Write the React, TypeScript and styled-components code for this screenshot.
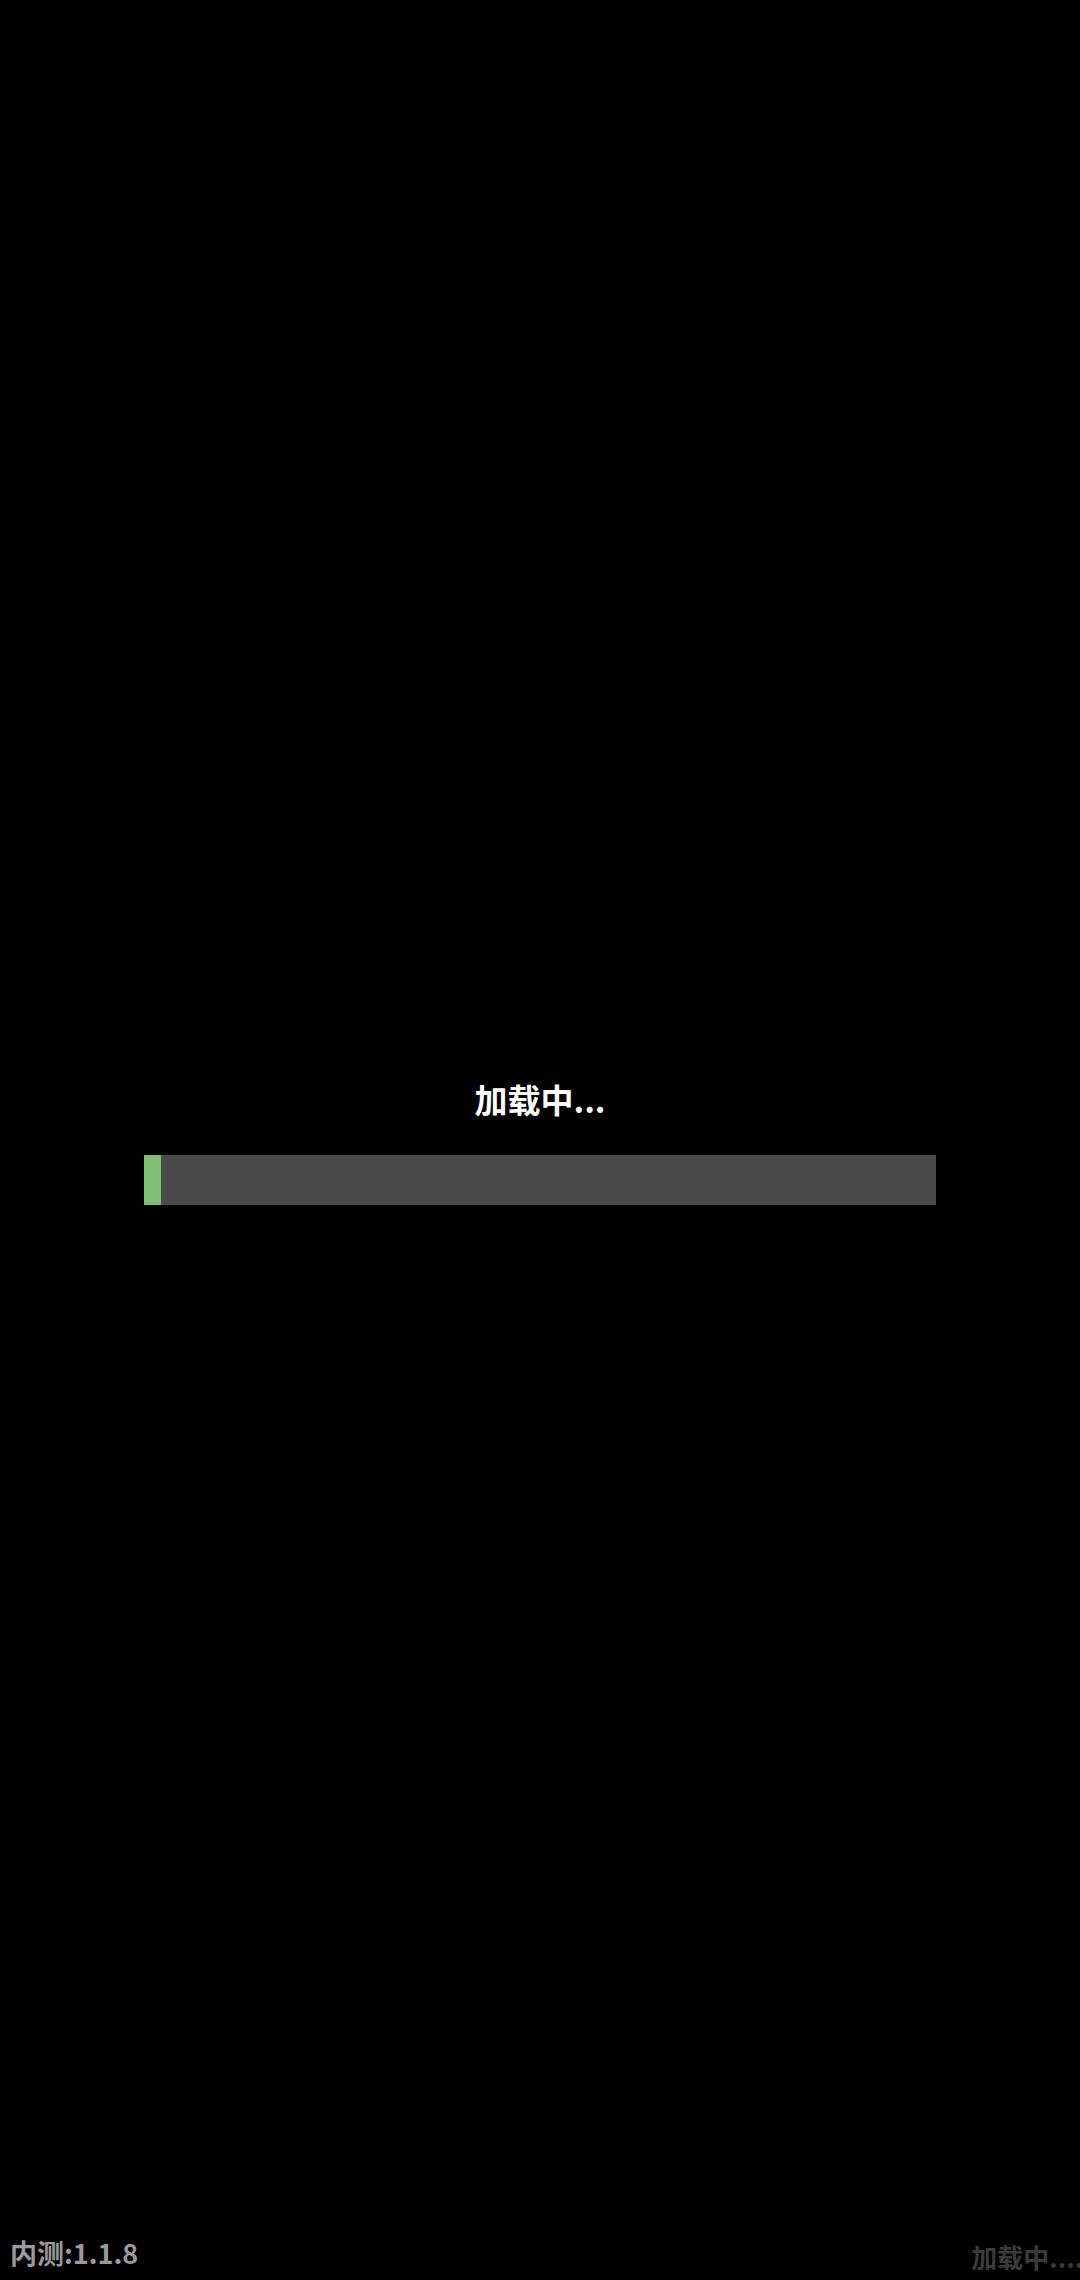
import React from 'react';
import styled, {createGlobalStyle} from "styled-components";

const GlobalStyle = createGlobalStyle`
  html, body {
    margin: 0;
    padding: 0;
    background: #000;
  }
  body {
    font-family: "Noto Sans CJK SC", "Noto Sans", sans-serif;
  }
`;

export default function App() {
    const progress = 2.1;

    return (
        <Page>
            <GlobalStyle/>
            <Loader>
                <Title>加载中...</Title>
                <Track>
                    <Fill style={{width: `${progress}%`}}/>
                </Track>
            </Loader>
            <Footer>
                <Version>内测:1.1.8</Version>
                <Status>加载中......</Status>
            </Footer>
        </Page>
    );
}

const Page = styled.div`
  position: relative;
  display: flex;
  flex-direction: column;
  height: 100vh;
  min-height: 2280px;
  background: #000;
  overflow: hidden;
`;

const Loader = styled.div`
  display: flex;
  flex-direction: column;
  align-items: center;
  margin-top: 1079px;
  gap: 35px;
`;

const Title = styled.div`
  color: #fff;
  font-size: 33px;
  font-weight: 700;
  line-height: 41px;
`;

const Track = styled.div`
  width: 792px;
  height: 50px;
  background: #4a4a4a;
  display: flex;
`;

const Fill = styled.div`
  height: 100%;
  background: #7fbf74;
`;

const Footer = styled.div`
  margin-top: auto;
  display: flex;
  justify-content: space-between;
  align-items: flex-end;
  padding-bottom: 8px;
`;

const Version = styled.div`
  color: #9a9a9a;
  font-size: 27px;
  font-weight: 700;
  line-height: 34px;
  padding-left: 10px;
  padding-bottom: 2px;
  white-space: nowrap;
`;

const Status = styled.div`
  color: #3a3a3a;
  font-size: 26px;
  font-weight: 700;
  line-height: 30px;
  white-space: nowrap;
  margin-right: -20px;
`;
